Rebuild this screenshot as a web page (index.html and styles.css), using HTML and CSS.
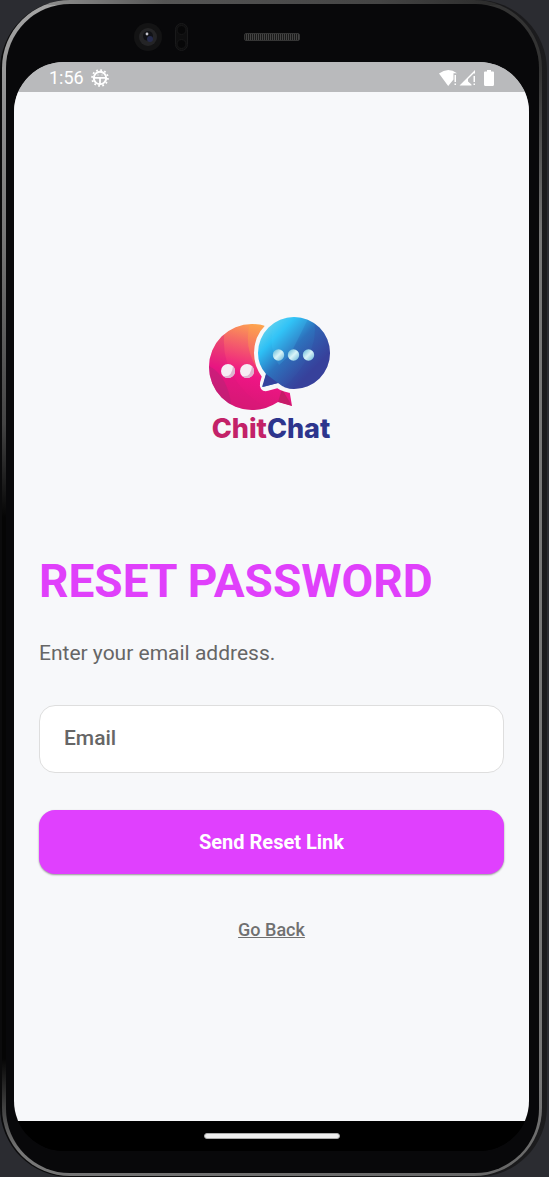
FILE: index.html
```html
<!DOCTYPE html>
<html lang="en">
<head>
<meta charset="utf-8">
<meta name="viewport" content="width=device-width, initial-scale=1">
<title>Reset Password</title>
<link rel="stylesheet" href="styles.css">
</head>
<body>
<div class="phone">
  <div class="rim">
    <div class="bezel">
      <div class="hardware" aria-hidden="true">
        <div class="sensors">
          <svg width="56" height="32" viewBox="0 0 56 32">
            <circle cx="14" cy="16" r="14" fill="#131314"/>
            <circle cx="14" cy="16" r="9" fill="#242426"/>
            <circle cx="14" cy="15" r="5" fill="#111216"/>
            <circle cx="16" cy="18" r="3" fill="#252a4c"/>
            <circle cx="13" cy="13" r="1.400" fill="#c4c4cc"/>
            <rect x="41.500" y="2.500" width="12" height="27" rx="6" fill="#0e0e0f" stroke="#19191a"/>
            <circle cx="47.500" cy="9" r="4.500" fill="#070708" stroke="#171718"/>
            <circle cx="47.500" cy="23" r="4.500" fill="#070708" stroke="#171718"/>
          </svg>
        </div>
        <div class="speaker"></div>
        <div class="sensors"></div>
      </div>
      <div class="screen">
        <header class="status">
          <div class="status-group">
            <span>1:56</span>
            <svg width="18" height="18" viewBox="0 0 18 18" fill="none" stroke="#fff">
              <circle cx="9" cy="9" r="6.200" stroke-width="2"/>
              <circle cx="9" cy="9" r="7.900" stroke-width="1.800" stroke-dasharray="1.800 2.336"/>
              <path d="M3 8.800h12M9 9v6" stroke-width="1.800"/>
              <path d="M6.500 6h1M10.500 6h1" stroke-width="1"/>
            </svg>
          </div>
          <svg width="56" height="18" viewBox="0 0 56 18" fill="#fff">
            <path d="M0 4.500Q9 -2.500 18 4.200H14.500V10.500L9.200 17z"/>
            <path d="M15.500 6h1.500v7h-1.500zM15.500 14.500h1.500V16h-1.500z"/>
            <path d="M20.500 16.500 36 1v3.500h-1.500L29 10v2.500l3.500 3v1z"/>
            <path d="M34.500 7H36v6h-1.500zM34.500 14.500H36V16h-1.500z"/>
            <path d="M48 1h4v1.500h2q1 0 1 1v12q0 1.500-1.500 1.500h-7q-1.500 0-1.500-1.500v-12q0-1 1-1h2z"/>
          </svg>
        </header>
        <main class="content">
          <svg class="logo" width="150" height="145" viewBox="2 0 150 145" role="img" aria-label="ChitChat">
            <defs>
              <linearGradient id="pink" x1="0.700" y1="0" x2="0.450" y2="1">
                <stop offset="0" stop-color="#ffb64a"/>
                <stop offset="0.280" stop-color="#f56a66"/>
                <stop offset="0.620" stop-color="#ef1585"/>
                <stop offset="1" stop-color="#d41872"/>
              </linearGradient>
              <linearGradient id="blue" x1="0.100" y1="0.120" x2="0.750" y2="0.750">
                <stop offset="0" stop-color="#69d4ee"/>
                <stop offset="0.240" stop-color="#2dc0f5"/>
                <stop offset="0.550" stop-color="#2d72bd"/>
                <stop offset="1" stop-color="#38409a"/>
              </linearGradient>
              <linearGradient id="pearl" x1="0" y1="0" x2="1" y2="1">
                <stop offset="0.200" stop-color="#8fcfe4"/>
                <stop offset="0.500" stop-color="#d9f4f8"/>
                <stop offset="1" stop-color="#65b5d8"/>
              </linearGradient>
              <clipPath id="left-bubble"><path d="M57 19A43 43 0 1 0 57 105Q71 105 83 97L97 101 94 83 89 82Q100 72 100 57A43 43 0 0 0 57 19z"/></clipPath>
              <clipPath id="right-bubble"><circle cx="99" cy="48" r="36"/></clipPath>
            </defs>
            <g clip-path="url(#left-bubble)">
              <rect x="10" y="15" width="92" height="92" fill="url(#pink)"/>
              <path d="M30 24Q25 53 42 77T83 106H10V20z" fill="#d81879" opacity=".3"/>
              <path d="M14 61Q34 71 37 106H10z" fill="#a72772" opacity=".4"/>
              <path d="M55 18Q47 46 68 72L82 18z" fill="#ffad45" opacity=".3"/>
              <path d="M83 97 87 84 97 101z" fill="#c61b68"/>
            </g>
            <path d="M99 12A36 36 0 1 1 99 84Q90 84 83 79L72 82Q68 83 69 78L71 71Q63 60 63 48A36 36 0 0 1 99 12z" fill="#f7f8fa" stroke="#f7f8fa" stroke-width="8" stroke-linejoin="round"/>
            <path d="M99 12A36 36 0 1 1 99 84Q90 84 83 78L68 82 71 69Q63 60 63 48A36 36 0 0 1 99 12z" fill="url(#blue)"/>
            <path d="M71 69 67 82 83 78z" fill="#34449e"/>
            <g clip-path="url(#right-bubble)">
              <path d="M118 10Q127 42 96 76L85 86H140V10z" fill="#3344a0" opacity=".25"/>
              <path d="M82 12Q70 38 84 60L95 50 114 12z" fill="#48d5ff" opacity=".18"/>
            </g>
            <g fill="#f6edf4">
              <circle cx="33" cy="66" r="7"/><circle cx="52" cy="66" r="7"/>
            </g>
            <path d="M28 71Q37 73 38 61A7 7 0 0 1 28 71zM47 71Q56 73 57 61A7 7 0 0 1 47 71z" fill="#ddb4cf"/>
            <g fill="url(#pearl)">
              <circle cx="83.500" cy="50" r="5.700"/><circle cx="98.500" cy="50" r="5.700"/><circle cx="113.500" cy="50" r="5.700"/>
            </g>
            <text class="wordmark" x="76" y="133" text-anchor="middle"><tspan fill="#c32268">Chit</tspan><tspan fill="#2d358d">Chat</tspan></text>
          </svg>
          <h1 class="title">RESET PASSWORD</h1>
          <form class="form">
            <label class="hint" for="email">Enter your email address.</label>
            <input class="field" id="email" type="email" placeholder="Email">
            <button class="submit" type="button">Send Reset Link</button>
          </form>
          <a class="back" href="#">Go Back</a>
        </main>
        <footer class="navbar"><div class="handle"></div></footer>
      </div>
    </div>
  </div>
</div>
</body>
</html>
```
FILE: styles.css
```css
* {
  box-sizing: border-box;
}

body {
  margin: 0;
  background: #2b2c31;
  font-family: Roboto, "Liberation Sans", sans-serif;
}

.phone {
  display: flex;
  min-height: 100vh;
  margin-right: 2px;
  padding: 0 5px 1px 2px;
  border-radius: 70px;
  background: linear-gradient(to right, #0b0b0c 50%, #1c1c1e);
}

.rim {
  display: flex;
  flex: 1;
  padding: 4px 3px 3px 4px;
  border-radius: 68px;
  background:
    linear-gradient(to right, #a5a5a5, #555 30%, #444 70%, #222) top / 100% 5px no-repeat,
    linear-gradient(to right, #777, #666) bottom / 100% 4px no-repeat,
    linear-gradient(#a5a5a5, #777 20%, #444 36%, #050505 44%, #050505 90%, #777 98%) left / 50% 100% no-repeat,
    linear-gradient(#333, #333 6%, #777 20%, #777 92%, #666) right / 50% 100% no-repeat;
}

.bezel {
  display: flex;
  flex: 1;
  flex-direction: column;
  padding: 0 10px 22px 8px;
  border-radius: 64px;
  background: #08080a;
}

.hardware {
  display: flex;
  align-items: center;
  height: 58px;
  padding-top: 8px;
}

.sensors {
  display: flex;
  flex: 1;
  padding-left: 120px;
}

.speaker {
  width: 56px;
  height: 8px;
  border: 1px solid #353535;
  border-radius: 2px;
  background: repeating-linear-gradient(to right, #1a1a1a 0 1px, #444 1px 2px);
}

.screen {
  display: flex;
  flex: 1;
  flex-direction: column;
  overflow: hidden;
  border-radius: 50px;
  background: linear-gradient(#b9babc 50%, #000 50%);
}

.status {
  display: flex;
  align-items: center;
  justify-content: space-between;
  height: 30px;
  padding: 2px 34px 0 35px;
  background: #b9babc;
  color: #fff;
  font-size: 18px;
  line-height: 24px;
}

.status-group {
  display: flex;
  align-items: center;
  gap: 7px;
}

.content {
  display: flex;
  flex: 1;
  flex-direction: column;
  padding: 213px 25px 32px;
  background: #f7f8fa;
}

.logo {
  align-self: center;
}

.wordmark {
  font-family: Inter, "Liberation Sans", sans-serif;
  font-size: 27px;
  font-weight: 800;
}

.title {
  margin: 103px 0 0;
  color: #e040fb;
  font-size: 46px;
  font-weight: 700;
  line-height: 56px;
}

.form {
  display: flex;
  flex-direction: column;
  margin-top: 30px;
}

.hint {
  color: #666;
  font-size: 21px;
  line-height: 28px;
}

.field {
  width: 100%;
  height: 68px;
  margin-top: 38px;
  padding: 0 24px 2px;
  border: 1px solid #dedede;
  border-radius: 16px;
  background: #fff;
  color: #222;
  font: 500 21px/28px Roboto, "Liberation Sans", sans-serif;
}

.field::placeholder {
  color: #666;
  opacity: 1;
}

.submit {
  height: 64px;
  margin-top: 37px;
  border: 0;
  border-radius: 16px;
  background: #e040fe;
  box-shadow: 0 1px 2px #0006;
  color: #fff;
  font: 700 20px/28px Roboto, "Liberation Sans", sans-serif;
}

.back {
  align-self: center;
  margin-top: 44px;
  color: #707070;
  font-size: 18px;
  font-weight: 500;
  line-height: 24px;
}

.navbar {
  display: flex;
  align-items: center;
  justify-content: center;
  height: 30px;
  background: #000;
}

.handle {
  width: 136px;
  height: 6px;
  border: 1px solid #aaa;
  border-radius: 3px;
  background: #eee;
}
```
